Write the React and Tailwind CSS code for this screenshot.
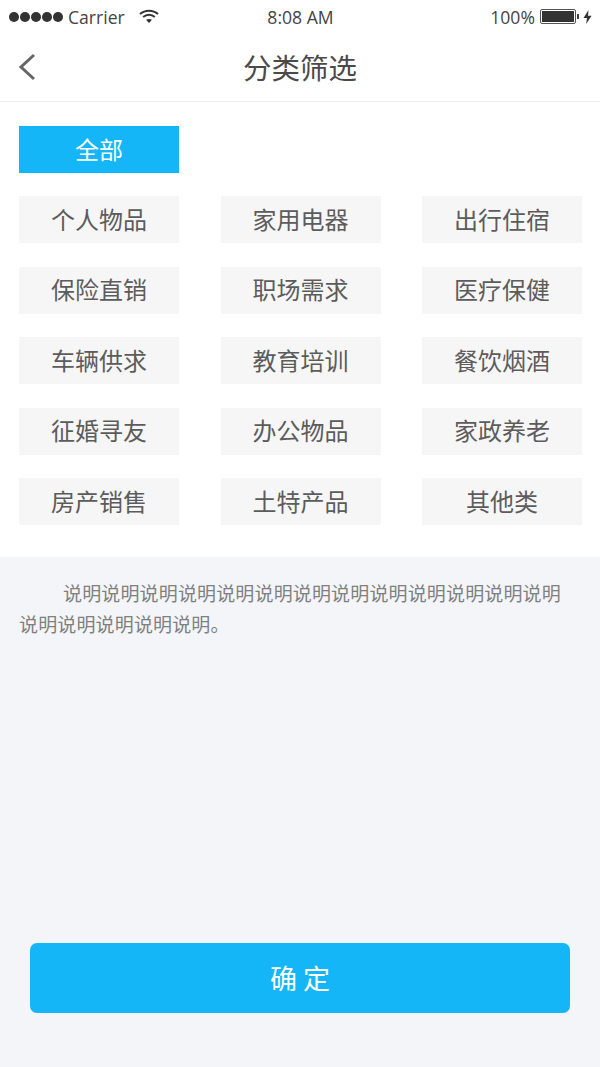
const CATEGORIES = [
  "个人物品", "家用电器", "出行住宿",
  "保险直销", "职场需求", "医疗保健",
  "车辆供求", "教育培训", "餐饮烟酒",
  "征婚寻友", "办公物品", "家政养老",
  "房产销售", "土特产品", "其他类",
];

const StatusBar = () => (
  <div className="h-[34px] flex items-center justify-between pl-[9px] pr-[8px] text-[17.6px] text-[#444] font-['Open_Sans',sans-serif]">
    <div className="flex items-center w-[200px]">
      <div className="flex gap-[1px]">
        {[0, 1, 2, 3, 4].map((i) => (
          <span key={i} className="w-[10px] h-[10px] rounded-full bg-[#333]" />
        ))}
      </div>
      <span className="ml-[5px]">Carrier</span>
      <svg className="ml-[14px]" width="20" height="15" viewBox="0 0 20 15" fill="none" stroke="#333" strokeWidth="2">
        <path d="M1 5 C6 0.5 14 0.5 19 5" />
        <path d="M4.2 8 C7.5 5 12.5 5 15.8 8" />
        <path d="M10 14 L7 10.8 C8.8 9.6 11.2 9.6 13 10.8 Z" fill="#333" stroke="none" />
      </svg>
    </div>
    <span>8:08 AM</span>
    <div className="flex items-center justify-end w-[200px]">
      <span>100%</span>
      <div className="ml-[5px] w-[36px] h-[15px] border border-[#555] p-[1px] rounded-[2px]">
        <div className="w-full h-full bg-[#333]" />
      </div>
      <span className="ml-[1px] w-[2px] h-[5px] bg-[#444]" />
      <svg className="ml-[4px]" width="9" height="14" viewBox="0 0 9 14">
        <path d="M5.5 0 L0.5 8 H4 L3.2 14 L8.5 5.8 H5 Z" fill="#333" />
      </svg>
    </div>
  </div>
);

const Tag = ({ label, active }) => (
  <div
    className={`h-[47px] w-[160px] flex items-center justify-center text-[24px] pb-[2px] ${
      active ? "bg-[#14b6f7] text-white" : "bg-[#f6f6f6] text-[#5c5c5c]"
    }`}
  >
    {label}
  </div>
);

const App = () => {
  return (
    <div className="w-[600px] h-[1067px] flex flex-col bg-[#f3f5f9] font-['Noto_Sans_CJK_SC',sans-serif]">
      <div className="bg-white border-b border-[#eeeeee]">
        <StatusBar />
        <div className="h-[67px] flex items-center relative justify-center">
          <svg className="absolute left-[18px] top-[19px]" width="18" height="28" viewBox="0 0 18 28" fill="none" stroke="#666" strokeWidth="3">
            <path d="M16 2 L3 14 L16 26" />
          </svg>
          <span className="text-[28.5px] text-[#4a4a4a]">分类筛选</span>
        </div>
      </div>

      <div className="bg-white h-[455px] pl-[19px] pr-[18px] pt-[24px]">
        <Tag label="全部" active />
        <div className="grid grid-cols-[160px_160px_160px] justify-between gap-y-[23.5px] mt-[23px]">
          {CATEGORIES.map((c) => (
            <Tag key={c} label={c} />
          ))}
        </div>
      </div>

      <p className="pl-[19px] pr-[30px] pt-[20px] text-[19px] leading-[31px] text-[#808080] indent-[44px] tracking-[0.15px]">
        说明说明说明说明说明说明说明说明说明说明说明说明说明说明说明说明说明说明。
      </p>

      <div className="mt-auto mb-[54px] mx-[30px] h-[70px] rounded-[7px] bg-[#14b6f7] text-white text-[27px] flex items-center justify-center">
        确 定
      </div>
    </div>
  );
};

export default App;
